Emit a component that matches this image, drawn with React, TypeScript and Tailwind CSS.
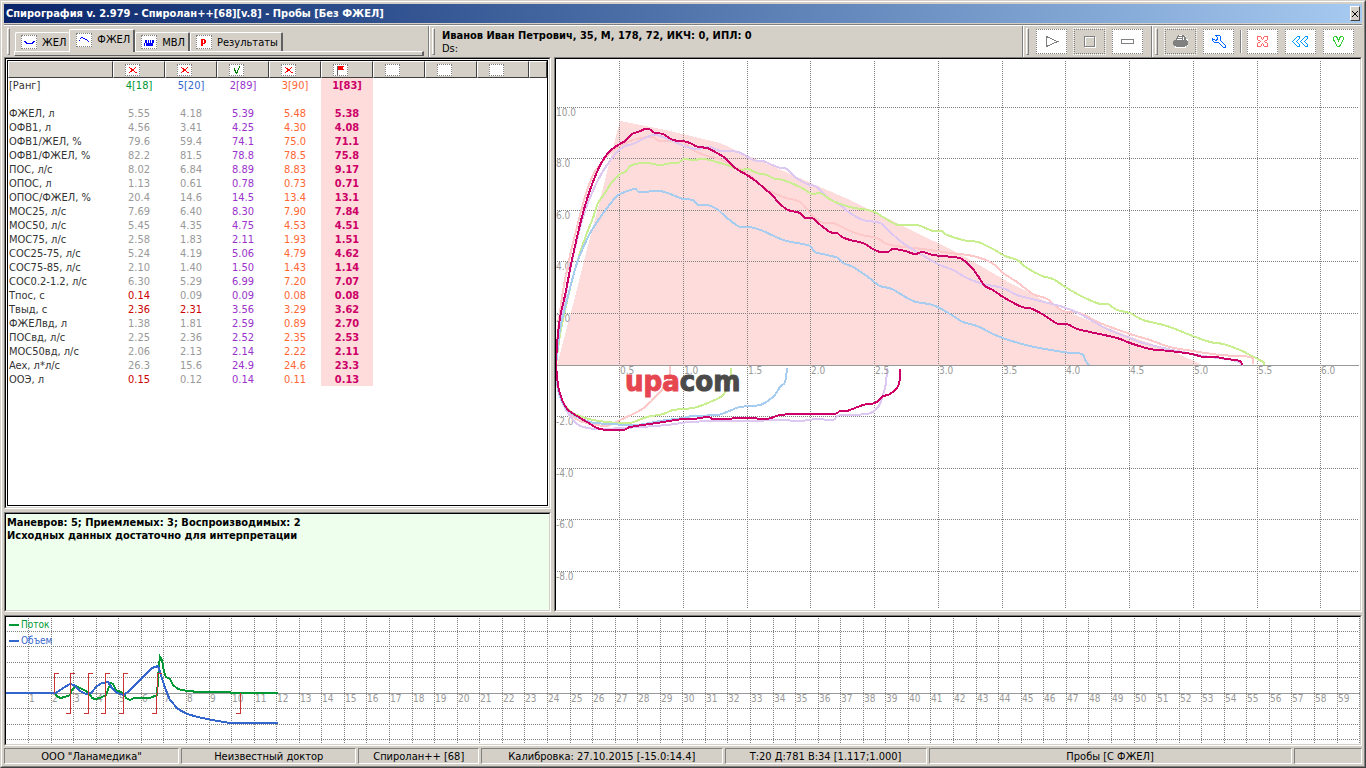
import type { ReactNode } from 'react'
import clsx from 'clsx'

type Curve = { color: string; points: string[] }

const tabs = [
  { label: 'ЖЕЛ', icon: <path d="M2 5h2v1h1v1h5v-1h1v-1h2v1h-1v1h-1v1h-7v-1h-1v-1h-1z" fill="#00f" /> },
  { label: 'ФЖЕЛ', icon: <path d="M2 6h1v-2h1v-1h2v1h2v1h2v1h1v1h1v1h-1v-1h-1v-1h-2v-1h-2v-1h-2v1h-1v2h-1z" fill="#00f" /> },
  {
    label: 'МВЛ',
    icon: (
      <path
        d="M2 7h1v3h-1zM3 4h1v3h-1zM4 4h1v6h-1zM5 7h1v3h-1zM6 4h1v6h-1zM7 7h1v3h-1zM8 4h1v6h-1zM9 7h1v3h-1zM10 4h1v6h-1zM11 4h1v3h-1z"
        fill="#00f"
      />
    ),
  },
  { label: 'Результаты', icon: <path d="M4 3h4v1h1v3h-1v1h-2v2h-2zM6 4v3h1v-3z" fill="red" /> },
]

const marks = ['cross', 'cross', 'check', 'cross', 'flag', 'none', 'none', 'none'] as const

const valueColors = ['text-[#999]', 'text-[#999]', 'text-[#9933cc]', 'text-[#ff6633]', 'text-[#cc0066]']
const rankColors = ['text-[#009933]', 'text-[#3366cc]', 'text-[#9933cc]', 'text-[#ff6633]', 'text-[#cc0066]']
const ranks = ['4[18]', '5[20]', '2[89]', '3[90]', '1[83]']

const rows: [string, ...string[]][] = [
  ['ФЖЕЛ, л', '5.55', '4.18', '5.39', '5.48', '5.38'],
  ['ОФВ1, л', '4.56', '3.41', '4.25', '4.30', '4.08'],
  ['ОФВ1/ЖЕЛ, %', '79.6', '59.4', '74.1', '75.0', '71.1'],
  ['ОФВ1/ФЖЕЛ, %', '82.2', '81.5', '78.8', '78.5', '75.8'],
  ['ПОС, л/с', '8.02', '6.84', '8.89', '8.83', '9.17'],
  ['ОПОС, л', '1.13', '0.61', '0.78', '0.73', '0.71'],
  ['ОПОС/ФЖЕЛ, %', '20.4', '14.6', '14.5', '13.4', '13.1'],
  ['МОС25, л/с', '7.69', '6.40', '8.30', '7.90', '7.84'],
  ['МОС50, л/с', '5.45', '4.35', '4.75', '4.53', '4.51'],
  ['МОС75, л/с', '2.58', '1.83', '2.11', '1.93', '1.51'],
  ['СОС25-75, л/с', '5.24', '4.19', '5.06', '4.79', '4.62'],
  ['СОС75-85, л/с', '2.10', '1.40', '1.50', '1.43', '1.14'],
  ['СОС0.2-1.2, л/с', '6.30', '5.29', '6.99', '7.20', '7.07'],
  ['Тпос, с', '0.14', '0.09', '0.09', '0.08', '0.08'],
  ['Твыд, с', '2.36', '2.31', '3.56', '3.29', '3.62'],
  ['ФЖЕЛвд, л', '1.38', '1.81', '2.59', '0.89', '2.70'],
  ['ПОСвд, л/с', '2.25', '2.36', '2.52', '2.35', '2.53'],
  ['МОС50вд, л/с', '2.06', '2.13', '2.14', '2.22', '2.11'],
  ['Aex, л*л/с', '26.3', '15.6', '24.9', '24.6', '23.3'],
  ['ООЭ, л', '0.15', '0.12', '0.14', '0.11', '0.13'],
]

// out-of-range values, "row:column"
const alerts = ['Тпос, с:0', 'Твыд, с:0', 'Твыд, с:1', 'ООЭ, л:0']

const predicted =
  '557,365 575,297 585,257 600,200 615,140 620,121 670,131 720,143 740,152 850,200 905,227 960,254 1010,283 1065,311 1129,336 1175,352 1202,365'

const loops: Curve[] = [
  {
    color: '#ffc8c8',
    points: [
      '556,365 558,330 562,297 567,270 572,247 578,223 585,197 593,175 602,162 610,153 618,147 633,140 652,137 660,141 680,141 693,150 707,156 720,159 733,166 747,173 763,187 783,197 800,202 812,215 823,223 833,223 850,231 862,235 877,238 887,244 903,247 923,249 950,253 973,256 992,263 1003,273 1017,282 1033,294 1047,299 1063,311 1080,313 1100,323 1130,334 1150,340 1170,347 1193,351 1220,355 1250,357 1253,364',
      '556,365 558,385 562,400 575,418 590,424 597,425 607,426 620,420 633,414 645,407 660,392 667,383 670,376 670,366',
    ],
  },
  {
    color: '#dcc8f0',
    points: [
      '556,365 560,330 565,300 570,270 577,240 583,217 589,200 597,182 605,168 617,152 625,146 633,144 643,139 653,135 660,136 673,141 687,147 697,149 710,147 720,151 738,152 753,160 763,161 777,167 787,169 795,177 807,184 817,187 827,197 840,205 850,213 863,220 880,223 890,232 903,243 922,255 940,265 953,270 967,278 983,284 1003,288 1017,295 1040,301 1063,307 1080,314 1107,329 1130,338 1143,343 1177,351 1210,357 1233,360 1243,365',
      '556,365 558,390 565,408 575,422 583,427 600,429 640,427 667,425 690,422 717,421 750,421 780,420 800,421 817,419 833,420 840,415 867,414 878,407 883,395 886,383 887,368',
    ],
  },
  {
    color: '#c8ee90',
    points: [
      '556,365 560,335 568,297 574,273 580,253 587,233 593,218 598,203 605,193 612,182 620,174 625,172 632,165 647,163 660,165 672,163 678,163 684,159 693,160 703,159 713,161 730,166 740,170 748,169 757,173 767,175 775,179 783,180 800,187 812,194 820,193 833,201 850,207 872,211 883,217 898,225 917,225 933,231 942,231 947,235 967,241 978,242 993,249 1005,256 1017,260 1027,268 1042,276 1053,279 1067,288 1083,297 1100,304 1108,304 1117,310 1130,313 1143,320 1167,326 1190,335 1210,342 1223,344 1240,350 1250,355 1263,362 1264,365',
      '556,365 558,385 562,402 570,411 577,415 593,420 617,423 630,423 647,417 663,414 673,410 685,409 697,407 710,402 722,396 728,387 731,378 731,368',
    ],
  },
  {
    color: '#a6ccf0',
    points: [
      '556,365 560,330 567,300 577,263 588,237 597,222 607,208 617,196 625,192 635,189 640,192 660,191 673,195 683,199 693,200 698,205 707,205 717,209 727,218 740,227 750,227 763,231 783,240 797,243 810,246 815,252 827,255 838,258 843,263 853,267 868,277 880,286 892,289 913,301 933,305 950,314 963,322 977,326 1000,337 1030,346 1063,352 1082,354 1085,360 1089,365',
      '556,365 558,388 563,404 572,414 590,422 610,424 637,425 660,421 683,418 693,416 717,415 727,412 740,407 760,405 773,397 780,387 785,382 787,368',
    ],
  },
  {
    color: '#cc0066',
    points: [
      '556,365 557,345 559,325 561,312 564,300 568,280 573,255 578,233 583,213 590,190 597,172 603,160 610,151 618,145 625,141 632,134 638,132 645,129 649,129 655,133 663,134 673,140 683,141 690,143 698,147 707,148 717,153 725,158 732,165 738,170 747,175 757,182 765,189 772,195 780,204 788,210 800,213 805,218 812,218 818,223 830,232 837,233 842,237 850,240 863,243 873,249 880,252 888,252 893,249 905,251 915,254 923,252 933,255 953,257 962,259 972,268 978,276 985,286 993,290 1003,297 1022,307 1030,308 1042,314 1058,324 1067,324 1077,329 1090,332 1117,338 1130,343 1150,349 1170,351 1192,354 1203,357 1215,357 1227,359 1240,361 1242,365',
      '556,363 557,377 559,390 563,402 568,410 577,416 587,422 600,429 623,430 630,427 650,424 663,422 683,419 693,419 708,417 715,419 748,418 767,419 780,415 800,414 833,414 840,411 847,411 863,405 875,403 883,396 888,395 897,388 900,378 900,369',
    ],
  },
]

const volumeTicks = [619, 683, 747, 810, 874, 938, 1002, 1065, 1129, 1193, 1257, 1320]
const flowTicks: [number, string][] = [
  [107, '10.0'], [158, '8.0'], [210, '6.0'], [261, '4.0'], [313, '2.0'],
  [416, '-2.0'], [468, '-4.0'], [519, '-6.0'], [571, '-8.0'],
]

const flowTrace =
  '6,693 55,693 57,696 60,698 65,697 70,695 72,690 76,686 80,688 84,690 89,693 92,698 95,699 100,698 106,695 109,687 111,683 113,684 116,690 123,693 126,698 130,700 134,698 150,698 157,695 158,680 159,665 160,657 162,660 164,672 166,677 170,679 173,685 178,689 187,691 200,692 230,692 231,693 278,693'
const volumeTrace =
  '6,693 56,693 63,688 70,684 74,685 80,691 86,694 91,693 97,686 102,683 108,682 112,688 117,693 124,695 130,690 145,675 152,668 158,666 160,672 165,688 170,700 178,709 187,714 198,717 212,720 230,723 278,723'
const seconds = Array.from({ length: 60 }, (_, i) => i + 1)
const secondX = (n: number) => Math.floor(6 + 22.56 * n)

const status = [
  { text: 'ООО "Ланамедика"', width: 'flex-[175]' },
  { text: 'Неизвестный доктор', width: 'flex-[175]' },
  { text: 'Спиролан++ [68]', width: 'flex-[120]' },
  { text: 'Калибровка: 27.10.2015 [-15.0:14.4]', width: 'flex-[242]' },
  { text: 'Т:20 Д:781 В:34 [1.117;1.000]', width: 'flex-[202]' },
  { text: 'Пробы [С ФЖЕЛ]', width: 'flex-[365]' },
  { text: '', width: 'flex-[67]' },
]

// Catmull-Rom spline through the sampled points
function smooth(points: string) {
  const p = points.split(' ').map((pair) => pair.split(',').map(Number))
  let d = `M${p[0][0]} ${p[0][1]}`
  for (let i = 0; i < p.length - 1; i++) {
    const a = p[i - 1] ?? p[i]
    const b = p[i]
    const c = p[i + 1]
    const e = p[i + 2] ?? c
    d += `C${b[0] + (c[0] - a[0]) / 6} ${b[1] + (c[1] - a[1]) / 6} ${c[0] - (e[0] - b[0]) / 6} ${c[1] - (e[1] - b[1]) / 6} ${c[0]} ${c[1]}`
  }
  return d
}

function Sunken({ className, children }: { className?: string; children: ReactNode }) {
  return (
    <div className={clsx('flex min-h-0 min-w-0 border border-t-[#808080] border-l-[#808080] border-r-white border-b-white', className)}>
      <div className="flex-1 min-h-0 min-w-0 overflow-hidden border border-t-black border-l-black border-r-[#d4d0c8] border-b-[#d4d0c8]">
        {children}
      </div>
    </div>
  )
}

function Gripper() {
  return <div className="w-[3px] h-[27px] shrink-0 border border-l-white border-t-white border-r-[#808080] border-b-[#808080]" />
}

function Divider() {
  return <div className="w-[2px] self-stretch shrink-0 border-l border-l-[#808080] border-r border-r-white" />
}

function ToolButton({ label, disabled, children }: { label: string; disabled?: boolean; children: ReactNode }) {
  return (
    <button
      aria-label={label}
      disabled={disabled}
      className={clsx('w-[31px] h-[25px] shrink-0 border border-dotted border-[#808080]', disabled ? 'bg-[#d4d0c8] outline-1 outline-dotted outline-white' : 'bg-white')}
    >
      <svg width="29" height="23" viewBox="0 0 29 23" fill="none" shapeRendering="crispEdges">
        {children}
      </svg>
    </button>
  )
}

function Mark({ kind }: { kind: (typeof marks)[number] }) {
  return (
    <span className="block ml-[11px] w-[15px] h-[12px] bg-white border border-dotted border-[#808080]">
      <svg width="13" height="10" viewBox="0 0 13 10" fill="none" shapeRendering="crispEdges" className="block">
        {kind === 'cross' && (
          <path fill="red" d="M3 2h1v1h-1zM9 2h1v1h-1zM4 3h2v1h-2zM8 3h1v1h-1zM5 4h3v1h-3zM6 5h1v1h-1zM5 5h3v1h-3zM4 6h2v1h-2zM8 6h1v1h-1zM3 7h1v1h-1zM9 7h2v1h-2z" />
        )}
        {kind === 'check' && (
          <path fill="#008000" d="M4 3h1v3h-1zM5 5h1v3h-1zM6 7h1v2h-1zM7 5h1v3h-1zM8 3h1v2h-1zM9 1h1v2h-1z" />
        )}
        {kind === 'flag' && (
          <>
            <path fill="#606060" d="M3 1h1v9h-1z" />
            <path fill="red" d="M4 1h6v1h-1v2h1v1h-6z" />
          </>
        )}
      </svg>
    </span>
  )
}

function Toolbar() {
  return (
    <div className="flex h-[34px] shrink-0 pt-px">
      <div className="flex flex-1 min-w-0 border-t border-[#808080]">
        <div className="flex flex-1 min-w-0 border-t border-white">
          <div className="flex w-[424px] shrink-0 pt-[2px] pl-[3px]">
            <Gripper />
            <div className="flex flex-col flex-1 pl-1 pr-1">
              <div role="tablist" className="flex items-end h-[23px] pl-px">
                {tabs.map((tab, i) => (
                  <button
                    key={tab.label}
                    role="tab"
                    aria-selected={i === 1}
                    className={clsx(
                      'flex items-center gap-[5px] pr-[3px] border-t border-t-white border-l border-l-white rounded-t-[2px] whitespace-nowrap',
                      i === 1 ? 'relative h-[23px] -mb-px pb-[3px] pl-[6px] bg-[#d4d0c8]' : 'h-[19px] pl-[5px]',
                      i > 0 && 'border-r-2 border-r-[#606060]',
                    )}
                  >
                    <span className="w-[16px] h-[14px] bg-white border border-dotted border-[#808080]">
                      <svg width="14" height="12" viewBox="0 0 14 12" fill="none" shapeRendering="crispEdges" className="block">
                        {tab.icon}
                      </svg>
                    </span>
                    <span className="pt-[2px]">{tab.label}</span>
                  </button>
                ))}
              </div>
              <div className="h-[5px] border border-t-white border-l-white border-r-2 border-r-[#606060] border-b-[#606060]" />
            </div>
          </div>
          <Divider />
          <div className="flex flex-1 min-w-0 pt-[2px] pl-[2px]">
            <Gripper />
            <div className="pt-px pl-[7px] leading-[13px] whitespace-nowrap">
              <p className="font-bold">Иванов Иван Петрович, 35, M, 178, 72, ИКЧ: 0, ИПЛ: 0</p>
              <p>Ds:</p>
            </div>
          </div>
          <Divider />
          <div className="flex items-center gap-[7px] pl-[2px] pr-[8px]">
            <Gripper />
            <ToolButton label="Пуск">
              <path d="M9.500 6.500v10M9.500 6.500l11 5l-11 5" stroke="#808080" />
            </ToolButton>
            <ToolButton label="Стоп" disabled>
              <path d="M10.500 7.500h10v10h-10z" stroke="#fff" />
              <path d="M9.500 6.500h10v10h-10z" stroke="#808080" />
            </ToolButton>
            <ToolButton label="Пауза">
              <path d="M8.500 9.500h12v4h-12z" stroke="#808080" />
            </ToolButton>
          </div>
          <Divider />
          <div className="flex items-center gap-[7px] pl-[2px] pr-[6px]">
            <Gripper />
            <ToolButton label="Печать" disabled>
              <path fill="#fff" d="M11 6h9v3h2v7h-2v2h-11v-2h2z" />
              <path fill="#808080" d="M12 5h6v1h1v1h1v3h1v1h1v4h-1v1h-2v1h-9v-1h-2v-1h-1v-4h1v-1h2v-2h1v-2h1z" />
              <path stroke="#fff" d="M12 7.500h4M11 9.500h5M13 5.500h3M17.500 7v3" />
            </ToolButton>
            <ToolButton label="Настройки">
              <path stroke="#0066ff" d="M12.500 5.500h3l1 1v4l5 5v2h-2l-5-5h-4l-2-2v-2l3 2h1l1-2v-1l-2-2z" />
            </ToolButton>
          </div>
          <div className="w-px my-1 shrink-0 bg-white border-l border-[#808080] box-content" />
          <div className="flex items-center gap-[7px] pl-[5px] pr-[8px]">
            <ToolButton label="Удалить">
              <path stroke="#ff6666" d="M9.500 6.500h3l2 3l2-3h3v3l-3 2l3 2v3h-3l-2-3l-2 3h-3v-3l3-2l-3-2z" />
            </ToolButton>
            <ToolButton label="Назад">
              <path stroke="#0099ff" d="M6.500 11.500l5-5h2v2l-3 3l3 3v2h-2zM14.500 11.500l5-5h2v2l-3 3l3 3v2h-2z" />
            </ToolButton>
            <ToolButton label="Принять">
              <path stroke="#33cc33" d="M9.500 7.500l1-1h2l2 4l2-4h2l1 1v2l-4 7h-2l-4-7z" />
            </ToolButton>
          </div>
        </div>
      </div>
    </div>
  )
}

function ResultsTable() {
  return (
    <table className="w-full table-fixed border-separate border-spacing-0 text-[#333]">
      <colgroup>
        <col className="w-[105px]" />
        {marks.map((_, i) => (
          <col key={i} className="w-[52px]" />
        ))}
        <col />
      </colgroup>
      <thead>
        <tr className="h-[17px] bg-[#d4d0c8]">
          {[null, ...marks, null].map((kind, i) => (
            <th key={i} className="p-0 border border-t-white border-l-white border-r-[#404040] border-b-[#404040]">
              {kind && <Mark kind={kind} />}
            </th>
          ))}
        </tr>
      </thead>
      <tbody className="leading-[12px]">
        <tr>
          <td className="p-0 pt-[2px] pl-px">[Ранг]</td>
          {ranks.map((rank, i) => (
            <td key={rank} className={clsx('p-0 pt-[2px] text-center', rankColors[i], i === 4 && 'bg-[#ffdcdc] font-bold')}>
              {rank}
            </td>
          ))}
        </tr>
        <tr className="h-[14px]">
          <td colSpan={5} />
          <td className="bg-[#ffdcdc]" />
        </tr>
        {rows.map(([name, ...values]) => (
          <tr key={name}>
            <td className="p-0 pt-[2px] pl-px whitespace-nowrap">{name}</td>
            {values.map((value, i) => (
              <td
                key={i}
                className={clsx(
                  'p-0 pt-[2px] text-center',
                  alerts.includes(`${name}:${i}`) ? 'text-[#cc0000]' : valueColors[i],
                  i === 4 && 'bg-[#ffdcdc] font-bold',
                )}
              >
                {value}
              </td>
            ))}
          </tr>
        ))}
      </tbody>
    </table>
  )
}

function LoopChart() {
  return (
    <svg viewBox="556 59 804 551" preserveAspectRatio="xMinYMin meet" className="block w-full h-full" fill="none" shapeRendering="crispEdges">
      <polygon points={predicted} fill="#ffdcdc" />
      <g fill="#999" fontSize="10">
        {flowTicks.map(([y, label]) => (
          <text key={label} x="556" y={y + 9}>{label}</text>
        ))}
      </g>
      <g stroke="#808080" strokeDasharray="1 1">
        {volumeTicks.map((x) => (
          <path key={x} d={`M${x + 0.5} 61V609`} />
        ))}
        {flowTicks.map(([y]) => (
          <path key={y} d={`M557 ${y + 0.5}H1358`} />
        ))}
      </g>
      <path d="M556 365.5H1359" stroke="#999" />
      <g strokeWidth="2">
        {loops.map((loop) =>
          loop.points.map((points) => <path key={points} d={smooth(points)} stroke={loop.color} />),
        )}
      </g>
      <g fill="#999" fontSize="10">
        {volumeTicks.map((x, i) => (
          <text key={x} x={x + 1} y="374">{((i + 1) / 2).toFixed(1)}</text>
        ))}
      </g>
      <text x="625" y="391" fontSize="29" fontWeight="bold" fill="#e64650" stroke="#e64650" strokeWidth="1">
        upa<tspan fill="#4a4a4a" stroke="#4a4a4a">com</tspan>
      </text>
    </svg>
  )
}

function TraceChart() {
  return (
    <svg viewBox="6 617 1354 127" preserveAspectRatio="xMinYMin meet" className="block w-full h-full" fill="none" shapeRendering="crispEdges">
      <g stroke="#808080" strokeDasharray="1 1">
        {seconds.map((n) => (
          <path key={n} d={`M${secondX(n) + 0.5} 618V743`} />
        ))}
        {[631, 646, 662, 677, 708, 724, 739].map((y) => (
          <path key={y} d={`M7 ${y + 0.5}H1359`} />
        ))}
      </g>
      <path d="M6 693.5H1360" stroke="#999" />
      <g fill="#999" fontSize="10">
        {seconds.slice(0, 59).map((n) => (
          <text key={n} x={secondX(n) + 1} y="702">{n}</text>
        ))}
      </g>
      <g strokeWidth="2">
        <polyline points={flowTrace} stroke="#009933" />
        <polyline points={volumeTrace} stroke="#3366cc" />
        <path d="M9 625H19" stroke="#009933" />
        <path d="M9 641H19" stroke="#3366cc" />
      </g>
      <g stroke="#cc3333">
        {[54, 70, 88, 105, 123, 157].map((x) => (
          <path key={x} d={`M${x + 5} 673.5H${x + 0.5}V693`} />
        ))}
        {[70, 88, 105, 123, 156, 240].map((x) => (
          <path key={x} d={`M${x - 4} 713.5H${x + 0.5}V693`} />
        ))}
      </g>
      <text x="21" y="628" fontSize="10" fill="#009933">Поток</text>
      <text x="21" y="644" fontSize="10" fill="#3366cc">Объем</text>
    </svg>
  )
}

export default function App() {
  return (
    <div className="h-screen flex border border-t-[#d4d0c8] border-l-[#d4d0c8] border-r-[#404040] border-b-[#404040] bg-[#d4d0c8] font-['DejaVu_Sans_Condensed',Tahoma,sans-serif] text-[11px] text-black">
      <div className="flex flex-col flex-1 min-w-0 p-[2px] border border-t-white border-l-white border-r-[#808080] border-b-[#808080]">
        <header className="flex items-center justify-between h-[19px] shrink-0 pl-[2px] pr-[2px] bg-linear-to-r from-[#0a246a] to-[#a6caf0]">
          <h1 className="pt-[2px] font-bold text-white whitespace-nowrap">Спирография v. 2.979 - Спиролан++[68][v.8] - Пробы [Без ФЖЕЛ]</h1>
          <button aria-label="Закрыть" className="flex items-center justify-center w-[10px] h-[15px] bg-[#d4d0c8] border border-t-white border-l-white border-r-[#404040] border-b-[#404040]">
            <svg width="6" height="6" viewBox="0 0 6 6" shapeRendering="crispEdges">
              <path d="M0 0h1v1h1v1h2v-1h1v-1h1v1h-1v1h-1v2h1v1h1v1h-1v-1h-1v-1h-2v1h-1v1h-1v-1h1v-1h1v-2h-1v-1h-1z" />
            </svg>
          </button>
        </header>
        <Toolbar />
        <main className="flex flex-1 min-h-0 gap-[3px]">
          <div className="flex flex-col w-[547px] shrink-0 gap-[3px]">
            <Sunken className="flex-1">
              <div className="h-full p-px bg-white">
                <div className="h-full bg-white border border-black">
                  <ResultsTable />
                </div>
              </div>
            </Sunken>
            <Sunken className="h-[100px] shrink-0 bg-[#eeffee]">
              <div className="px-px py-[2px] font-bold leading-[13px]">
                <p>Маневров: 5; Приемлемых: 3; Воспроизводимых: 2</p>
                <p>Исходных данных достаточно для интерпретации</p>
              </div>
            </Sunken>
          </div>
          <Sunken className="flex-1 bg-white">
            <LoopChart />
          </Sunken>
        </main>
        <Sunken className="h-[131px] shrink-0 mt-[3px] bg-white">
          <TraceChart />
        </Sunken>
        <footer className="flex gap-[2px] h-[16px] shrink-0 mt-[2px]">
          {status.map((cell, i) => (
            <div
              key={i}
              className={clsx('min-w-0 pt-[2px] text-center leading-[12px] whitespace-nowrap border border-t-[#808080] border-l-[#808080] border-r-white border-b-white', cell.width)}
            >
              {cell.text}
            </div>
          ))}
        </footer>
      </div>
    </div>
  )
}
